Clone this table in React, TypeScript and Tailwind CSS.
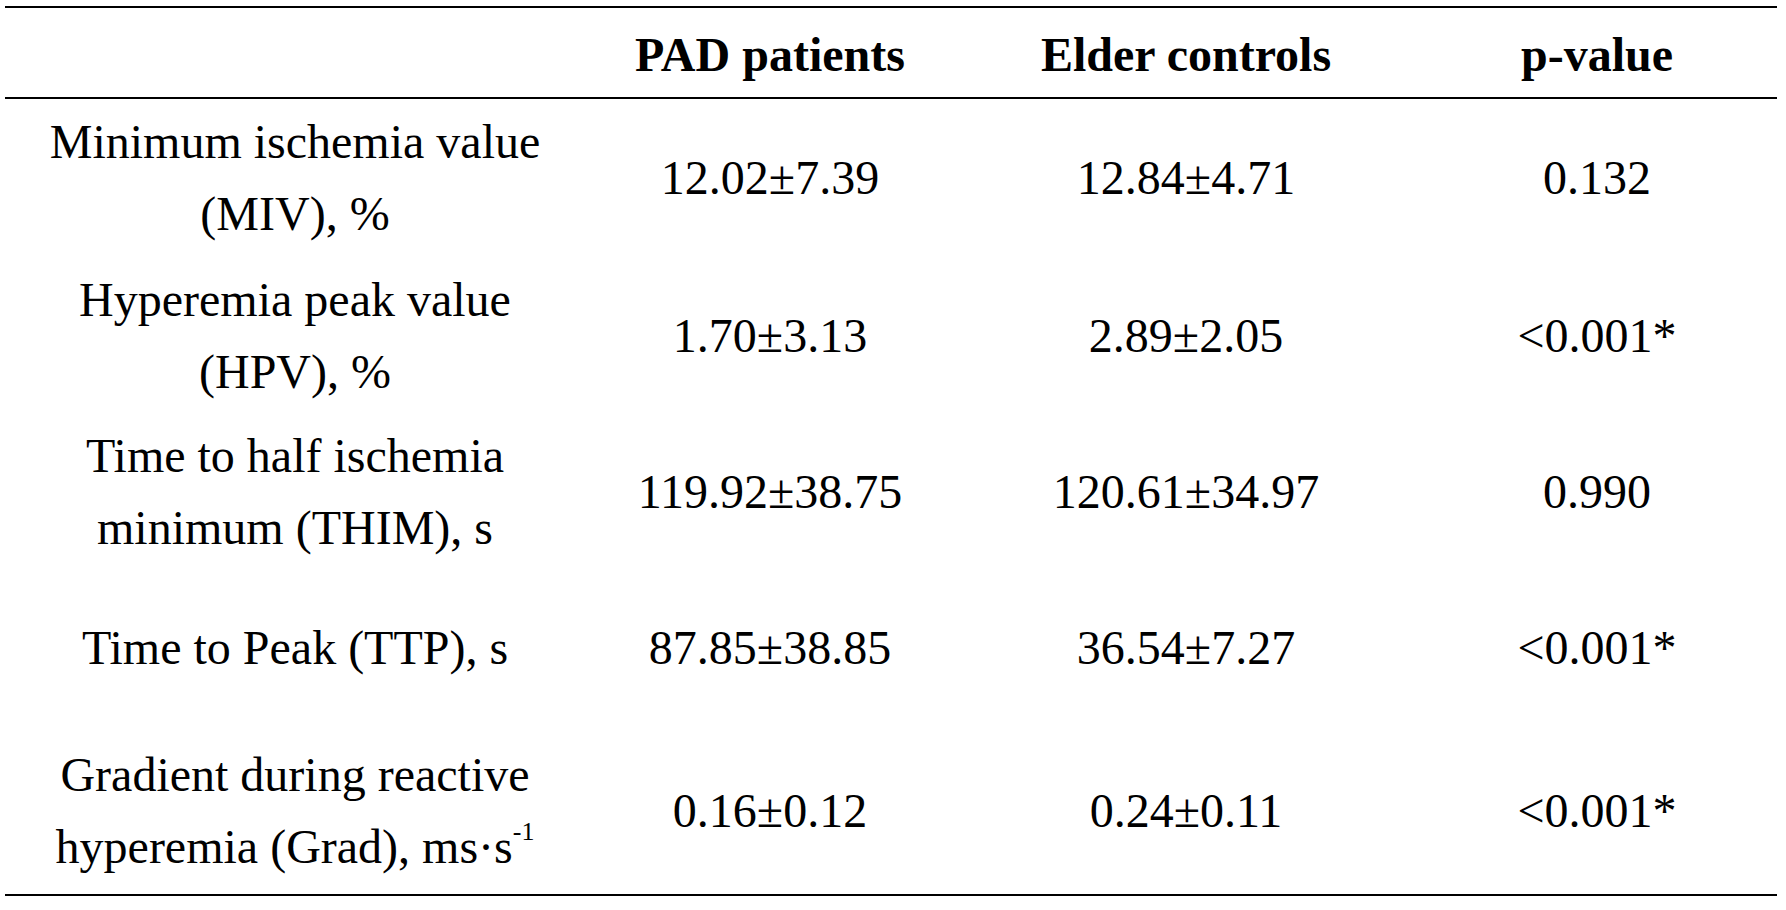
import React from "react";

type Row = {
  label: React.ReactNode;
  pad: string;
  control: string;
  p: string;
  height: string;
};

const rows: Row[] = [
  {
    label: (
      <>
        Minimum ischemia value
        <br />
        (MIV), %
      </>
    ),
    pad: "12.02±7.39",
    control: "12.84±4.71",
    p: "0.132",
    height: "h-[158px]",
  },
  {
    label: (
      <>
        Hyperemia peak value
        <br />
        (HPV), %
      </>
    ),
    pad: "1.70±3.13",
    control: "2.89±2.05",
    p: "<0.001*",
    height: "h-[158px]",
  },
  {
    label: (
      <>
        Time to half ischemia
        <br />
        minimum (THIM), s
      </>
    ),
    pad: "119.92±38.75",
    control: "120.61±34.97",
    p: "0.990",
    height: "h-[154px]",
  },
  {
    label: <>Time to Peak (TTP), s</>,
    pad: "87.85±38.85",
    control: "36.54±7.27",
    p: "<0.001*",
    height: "h-[158px]",
  },
  {
    label: (
      <>
        Gradient during reactive
        <br />
        hyperemia (Grad), ms·s
        <sup className="relative -top-[23px] text-[26px] leading-none">-1</sup>
      </>
    ),
    pad: "0.16±0.12",
    control: "0.24±0.11",
    p: "<0.001*",
    height: "h-[167px]",
  },
];

const cols = "grid grid-cols-[580px_370px_462px_360px]";

export default function App() {
  return (
    <div className="min-h-[910px] w-full bg-white text-black font-['Liberation_Serif','Times_New_Roman',serif] text-[48px] leading-[72px]">
      <div className="ml-[5px] pt-[6px] w-[1772px]">
        {/* Header */}
        <div className={`${cols} border-t-2 border-b-2 border-black font-bold text-center`}>
          <div className="pt-[11px] pb-[6px]" />
          <div className="pt-[11px] pb-[6px] whitespace-nowrap">PAD patients</div>
          <div className="pt-[11px] pb-[6px] whitespace-nowrap">Elder controls</div>
          <div className="pt-[11px] pb-[6px] whitespace-nowrap">p-value</div>
        </div>

        {/* Body */}
        <div className="border-b-2 border-black">
          {rows.map((row, i) => (
            <div key={i} className={`${cols} ${row.height} items-center text-center`}>
              <div className="whitespace-nowrap">{row.label}</div>
              <div className="whitespace-nowrap">{row.pad}</div>
              <div className="whitespace-nowrap">{row.control}</div>
              <div className="whitespace-nowrap">{row.p}</div>
            </div>
          ))}
        </div>
      </div>
    </div>
  );
}
